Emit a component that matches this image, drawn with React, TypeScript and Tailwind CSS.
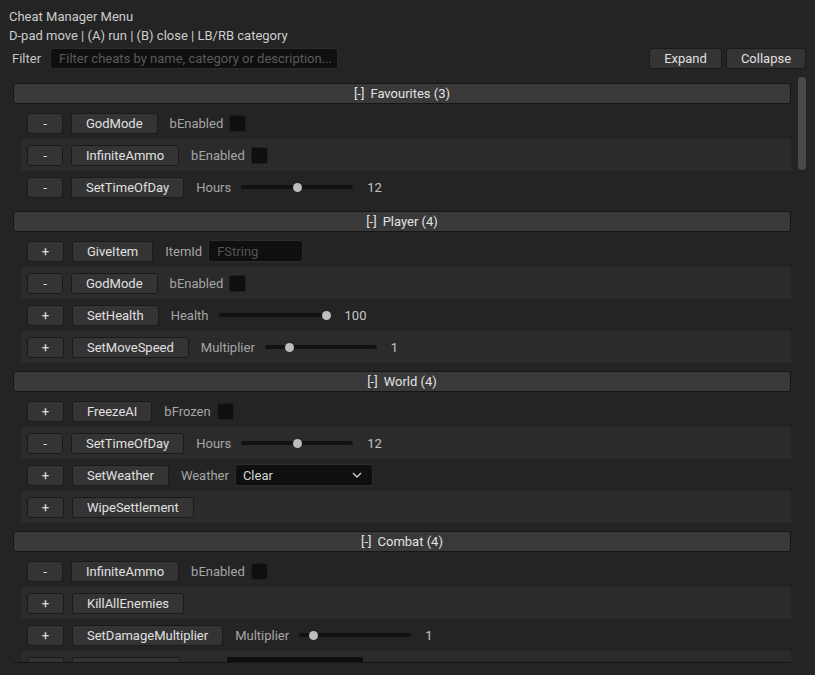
import React from 'react';

type Param =
  | { kind: 'check'; label: string }
  | { kind: 'slider'; label: string; value: string; frac: number }
  | { kind: 'text'; label: string; placeholder: string }
  | { kind: 'select'; label: string; value: string };

type Cheat = { sign: '+' | '-'; name: string; params?: Param[] };

const sections: { title: string; rows: Cheat[] }[] = [
  {
    title: 'Favourites (3)',
    rows: [
      { sign: '-', name: 'GodMode', params: [{ kind: 'check', label: 'bEnabled' }] },
      { sign: '-', name: 'InfiniteAmmo', params: [{ kind: 'check', label: 'bEnabled' }] },
      { sign: '-', name: 'SetTimeOfDay', params: [{ kind: 'slider', label: 'Hours', value: '12', frac: 0.5 }] },
    ],
  },
  {
    title: 'Player (4)',
    rows: [
      { sign: '+', name: 'GiveItem', params: [{ kind: 'text', label: 'ItemId', placeholder: 'FString' }] },
      { sign: '-', name: 'GodMode', params: [{ kind: 'check', label: 'bEnabled' }] },
      { sign: '+', name: 'SetHealth', params: [{ kind: 'slider', label: 'Health', value: '100', frac: 1 }] },
      { sign: '+', name: 'SetMoveSpeed', params: [{ kind: 'slider', label: 'Multiplier', value: '1', frac: 0.2 }] },
    ],
  },
  {
    title: 'World (4)',
    rows: [
      { sign: '+', name: 'FreezeAI', params: [{ kind: 'check', label: 'bFrozen' }] },
      { sign: '-', name: 'SetTimeOfDay', params: [{ kind: 'slider', label: 'Hours', value: '12', frac: 0.5 }] },
      { sign: '+', name: 'SetWeather', params: [{ kind: 'select', label: 'Weather', value: 'Clear' }] },
      { sign: '+', name: 'WipeSettlement' },
    ],
  },
  {
    title: 'Combat (4)',
    rows: [
      { sign: '-', name: 'InfiniteAmmo', params: [{ kind: 'check', label: 'bEnabled' }] },
      { sign: '+', name: 'KillAllEnemies' },
      { sign: '+', name: 'SetDamageMultiplier', params: [{ kind: 'slider', label: 'Multiplier', value: '1', frac: 0.1 }] },
      {
        sign: '+',
        name: 'SpawnEnemy',
        params: [
          { kind: 'select', label: 'Type', value: 'Grunt' },
          { kind: 'slider', label: 'Count', value: '3', frac: 0.22 },
        ],
      },
    ],
  },
];

const btn =
  'h-[21px] flex items-center rounded-[3px] border border-[#1a1a1a] bg-[#343434] text-[#e0e0e0] whitespace-nowrap';

const Slider: React.FC<{ frac: number }> = ({ frac }) => (
  <div className="relative w-[112px] h-[4px] rounded-full bg-[#121212]">
    <div
      className="absolute top-1/2 w-[9px] h-[9px] -mt-[4.5px] -ml-[4.5px] rounded-full bg-[#bdbdbd]"
      style={{ left: `${4 + frac * 104}px` }}
    />
  </div>
);

const ParamView: React.FC<{ p: Param }> = ({ p }) => {
  const label = <span className="text-[#a6a6a6] whitespace-nowrap">{p.label}</span>;
  if (p.kind === 'check')
    return (
      <div className="flex items-center gap-[6px]">
        {label}
        <div className="w-[17px] h-[17px] rounded-[2px] border border-[#1e1e1e] bg-[#0f0f0f]" />
      </div>
    );
  if (p.kind === 'slider')
    return (
      <div className="flex items-center">
        {label}
        <div className="ml-[10px]">
          <Slider frac={p.frac} />
        </div>
        <span className="ml-[14px] text-[#c4c4c4]">{p.value}</span>
      </div>
    );
  if (p.kind === 'text')
    return (
      <div className="flex items-center gap-[6px]">
        {label}
        <div className="w-[95px] h-[22px] px-[8px] flex items-center rounded-[3px] border border-[#2c2c2c] bg-[#0f0f0f] text-[#555]">
          {p.placeholder}
        </div>
      </div>
    );
  return (
    <div className="flex items-center gap-[6px]">
      {label}
      <div className="w-[138px] h-[22px] pl-[7px] pr-[10px] flex items-center justify-between rounded-[3px] border border-[#2c2c2c] bg-[#0f0f0f] text-[#d6d6d6]">
        <span>{p.value}</span>
        <svg width="10" height="6" viewBox="0 0 10 6" fill="none">
          <path d="M1 1l4 4 4-4" stroke="#cfcfcf" strokeWidth="1.4" />
        </svg>
      </div>
    </div>
  );
};

const Row: React.FC<{ c: Cheat; alt: boolean }> = ({ c, alt }) => (
  <div className={`h-[32px] ml-[8px] pl-[6px] flex items-center ${alt ? 'bg-[#2b2b2b]' : ''}`}>
    <div className={`${btn} justify-center ${c.sign === '+' ? 'w-[37px]' : 'w-[36px]'}`}>{c.sign}</div>
    <div className={`${btn} ml-[8px] px-[14px]`}>{c.name}</div>
    {c.params && (
      <div className="ml-[12px] flex items-center gap-[14px]">
        {c.params.map((p, i) => (
          <ParamView key={i} p={p} />
        ))}
      </div>
    )}
  </div>
);

export default function App() {
  return (
    <div
      className="w-[815px] h-[675px] bg-[#242424] text-[13px] leading-[19px] text-[#cdcdcd] overflow-hidden flex flex-col"
      style={{ fontFamily: 'Roboto, "Noto Sans", sans-serif' }}
    >
      <div className="pt-[7px] pl-[9px]">
        <div>Cheat Manager Menu</div>
        <div>D-pad move | (A) run | (B) close | LB/RB category</div>
      </div>
      <div className="mt-[3px] pl-[12px] pr-[9px] flex items-center">
        <span className="text-[#c4c4c4]">Filter</span>
        <div className="ml-[9px] w-[288px] h-[21px] px-[8px] flex items-center rounded-[3px] border border-[#2c2c2c] bg-[#0f0f0f] text-[#5a5a5a] whitespace-nowrap overflow-hidden">
          Filter cheats by name, category or description...
        </div>
        <div className="ml-auto flex gap-[4px]">
          <div className={`${btn} w-[73px] justify-center`}>Expand</div>
          <div className={`${btn} w-[80px] justify-center`}>Collapse</div>
        </div>
      </div>
      <div className="mt-[7px] pl-[13px] pr-[9px] flex">
        <div className="w-[778px] h-[587px] overflow-hidden pt-[7px] border-b border-[#161616]">
          {sections.map((s, si) => (
            <div key={si} className={si > 0 ? 'mt-[8px]' : ''}>
              <div className="h-[21px] flex items-center justify-center gap-[6px] rounded-[3px] border border-[#161616] bg-[#393939] text-[#e2e2e2]">
                <span>[-]</span>
                <span>{s.title}</span>
              </div>
              <div className="mt-[3px]">
                {s.rows.map((r, ri) => (
                  <Row key={ri} c={r} alt={ri % 2 === 1} />
                ))}
              </div>
            </div>
          ))}
        </div>
        <div className="ml-[7px] w-[8px] h-[587px]">
          <div className="w-[8px] h-[93px] mt-[1px] rounded-full bg-[#4a4a4a]" />
        </div>
      </div>
    </div>
  );
}
